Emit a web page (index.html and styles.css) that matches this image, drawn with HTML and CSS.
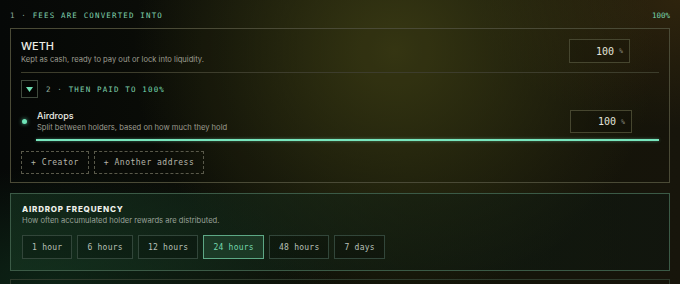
FILE: index.html
```html
<!DOCTYPE html>
<html lang="en">
  <head>
    <meta charset="UTF-8" />
    <meta name="viewport" content="width=device-width, initial-scale=1.0" />
    <title>Fee routing</title>
    <link rel="stylesheet" href="styles.css">
  </head>
  <body>
    <div class="page">
      <div class="step-head">
        <span class="step-label"><span class="muted">1 ·</span> FEES ARE CONVERTED INTO</span>
        <span class="step-total">100%</span>
      </div>

      <div class="card route-card">
        <div class="asset-row">
          <div class="asset-text">
            <div class="asset-name">WETH</div>
            <div class="asset-desc">Kept as cash, ready to pay out or lock into liquidity.</div>
          </div>
          <div class="pct-input">
            <span class="pct-value">100</span>
            <span class="pct-sign">%</span>
          </div>
        </div>

        <div class="divider"></div>

        <div class="step-row">
          <button class="toggle" aria-label="Collapse">
            <svg width="7" height="5" viewBox="0 0 7 5"><path d="M0 0 H7 L3.5 5 Z" fill="#6fe0b4"/></svg>
          </button>
          <span class="step-label"><span class="muted">2 ·</span> THEN PAID TO <span class="hl">100%</span></span>
        </div>

        <div class="recipient-row">
          <span class="dot"></span>
          <div class="recipient-text">
            <div class="recipient-name">Airdrops</div>
            <div class="recipient-desc">Split between holders, based on how much they hold</div>
          </div>
          <div class="pct-input small">
            <span class="pct-value">100</span>
            <span class="pct-sign">%</span>
          </div>
        </div>
        <div class="share-bar"><div class="share-fill" style="width: 100%"></div></div>

        <div class="add-row">
          <button class="add-btn">+ Creator</button>
          <button class="add-btn">+ Another address</button>
        </div>
      </div>

      <div class="card freq-card">
        <div class="freq-title">AIRDROP FREQUENCY</div>
        <div class="freq-desc">How often accumulated holder rewards are distributed.</div>
        <div class="freq-options">
          <button class="freq-btn">1 hour</button>
          <button class="freq-btn">6 hours</button>
          <button class="freq-btn">12 hours</button>
          <button class="freq-btn active">24 hours</button>
          <button class="freq-btn">48 hours</button>
          <button class="freq-btn">7 days</button>
        </div>
      </div>

      <div class="card next-card"></div>
    </div>
  </body>
</html>
```

FILE: styles.css
```css
/* base */
html,
body {
  height: 100%;
}

body {
  margin: 0;
  overflow: hidden;
  font-family: "Inter", "Noto Sans", sans-serif;
  color: #e6e6dc;
  background:
    radial-gradient(ellipse 48% 110% at 58% 18%, rgba(60, 60, 20, 0.9), transparent 80%),
    radial-gradient(ellipse 40% 60% at 100% 0%, rgba(56, 42, 14, 0.7), transparent 75%),
    radial-gradient(ellipse 55% 55% at 8% 100%, rgba(18, 58, 34, 0.55), transparent 75%),
    linear-gradient(90deg, #060807 0%, #121409 60%, #17150b 100%);
}

.page {
  padding: 10px 10px 0;
}

button {
  font-family: inherit;
  cursor: pointer;
}

/* step labels */
.step-head {
  display: flex;
  justify-content: space-between;
  align-items: center;
  height: 10px;
  margin-bottom: 8px;
}

.step-label {
  font-family: "DejaVu Sans Mono", monospace;
  font-size: 7.5px;
  letter-spacing: 1.15px;
  color: #7fcfac;
  white-space: pre;
}

.step-label .muted {
  color: #8eaa9b;
}

.step-label .hl {
  color: #74dcb2;
}

.step-total {
  font-family: "DejaVu Sans Mono", monospace;
  font-size: 7.5px;
  color: #78d6ae;
}

/* cards */
.card {
  border: 1px solid #4a4a36;
  background: rgba(0, 0, 0, 0.04);
}

.route-card {
  padding: 10px 10px 8px 10px;
}

.asset-row {
  display: flex;
  align-items: flex-start;
}

.asset-text {
  flex: 1;
}

.asset-name {
  font-size: 11px;
  font-weight: 500;
  line-height: 14px;
  color: #ecece4;
}

.asset-desc {
  font-size: 7.6px;
  line-height: 12px;
  margin-top: 1px;
  color: #9c9c90;
}

.pct-input {
  display: flex;
  justify-content: flex-end;
  align-items: center;
  gap: 5px;
  width: 61px;
  height: 24px;
  box-sizing: border-box;
  padding-right: 6px;
  margin-right: 29px;
  border: 1px solid #46462f;
  background: rgba(0, 0, 0, 0.14);
}

.pct-input.small {
  width: 62px;
  height: 23px;
  margin-right: 27px;
}

.pct-value {
  font-family: "DejaVu Sans Mono", monospace;
  font-size: 10px;
  color: #e4e4da;
}

.pct-sign {
  font-family: "DejaVu Sans Mono", monospace;
  font-size: 6.5px;
  color: #8c8c80;
}

.divider {
  height: 1px;
  background: #3d3d2c;
  margin: 6px 0 7px;
}

.step-row {
  display: flex;
  align-items: center;
  gap: 8px;
}

.toggle {
  display: flex;
  align-items: center;
  justify-content: center;
  width: 17px;
  height: 18px;
  padding: 0;
  border: 1px solid #3f4a3d;
  background: rgba(0, 0, 0, 0.35);
}

/* recipient */
.recipient-row {
  display: flex;
  align-items: flex-start;
  margin-top: 12px;
}

.dot {
  width: 5px;
  height: 5px;
  border-radius: 50%;
  background: #6fe4b8;
  box-shadow: 0 0 4px rgba(111, 228, 184, 0.8);
  margin: 9px 10px 0 1px;
}

.recipient-text {
  flex: 1;
}

.recipient-name {
  font-size: 9px;
  font-weight: 500;
  line-height: 12px;
  color: #ecece4;
}

.recipient-desc {
  font-size: 7.6px;
  line-height: 11px;
  color: #9c9c90;
}

.share-bar {
  height: 2px;
  margin: 6px 0 0 15px;
  background: rgba(255, 255, 255, 0.06);
}

.share-fill {
  height: 100%;
  background: #78e6bd;
  box-shadow: 0 0 3px rgba(120, 230, 189, 0.5);
}

.add-row {
  display: flex;
  gap: 5px;
  margin-top: 10px;
}

.add-btn {
  height: 23px;
  padding: 0 9px;
  border: 1px dashed #59594a;
  background: transparent;
  font-family: "DejaVu Sans Mono", monospace;
  font-size: 8px;
  letter-spacing: 0.5px;
  color: #b6b6aa;
}

/* frequency */
.freq-card {
  margin-top: 10px;
  padding: 10px 11px 11px;
  border-color: #3b5a46;
  background: linear-gradient(90deg, rgba(24, 58, 36, 0.55), rgba(14, 30, 20, 0.45) 60%, rgba(12, 22, 16, 0.5));
}

.freq-title {
  font-size: 8px;
  font-weight: 800;
  line-height: 11px;
  letter-spacing: 0.8px;
  color: #eef0ea;
}

.freq-desc {
  font-size: 7.6px;
  line-height: 11px;
  color: #97a097;
}

.freq-options {
  display: flex;
  gap: 5px;
  margin-top: 9px;
}

.freq-btn {
  height: 24px;
  padding: 0 9px;
  border: 1px solid #32463a;
  background: rgba(0, 0, 0, 0.18);
  font-family: "DejaVu Sans Mono", monospace;
  font-size: 8px;
  letter-spacing: 0.25px;
  color: #b8c0b8;
}

.freq-btn.active {
  border-color: #5da885;
  background: rgba(60, 130, 90, 0.25);
  color: #74d8ad;
}

.next-card {
  margin-top: 8px;
  height: 40px;
  border-color: #2e3a2c;
}
```
